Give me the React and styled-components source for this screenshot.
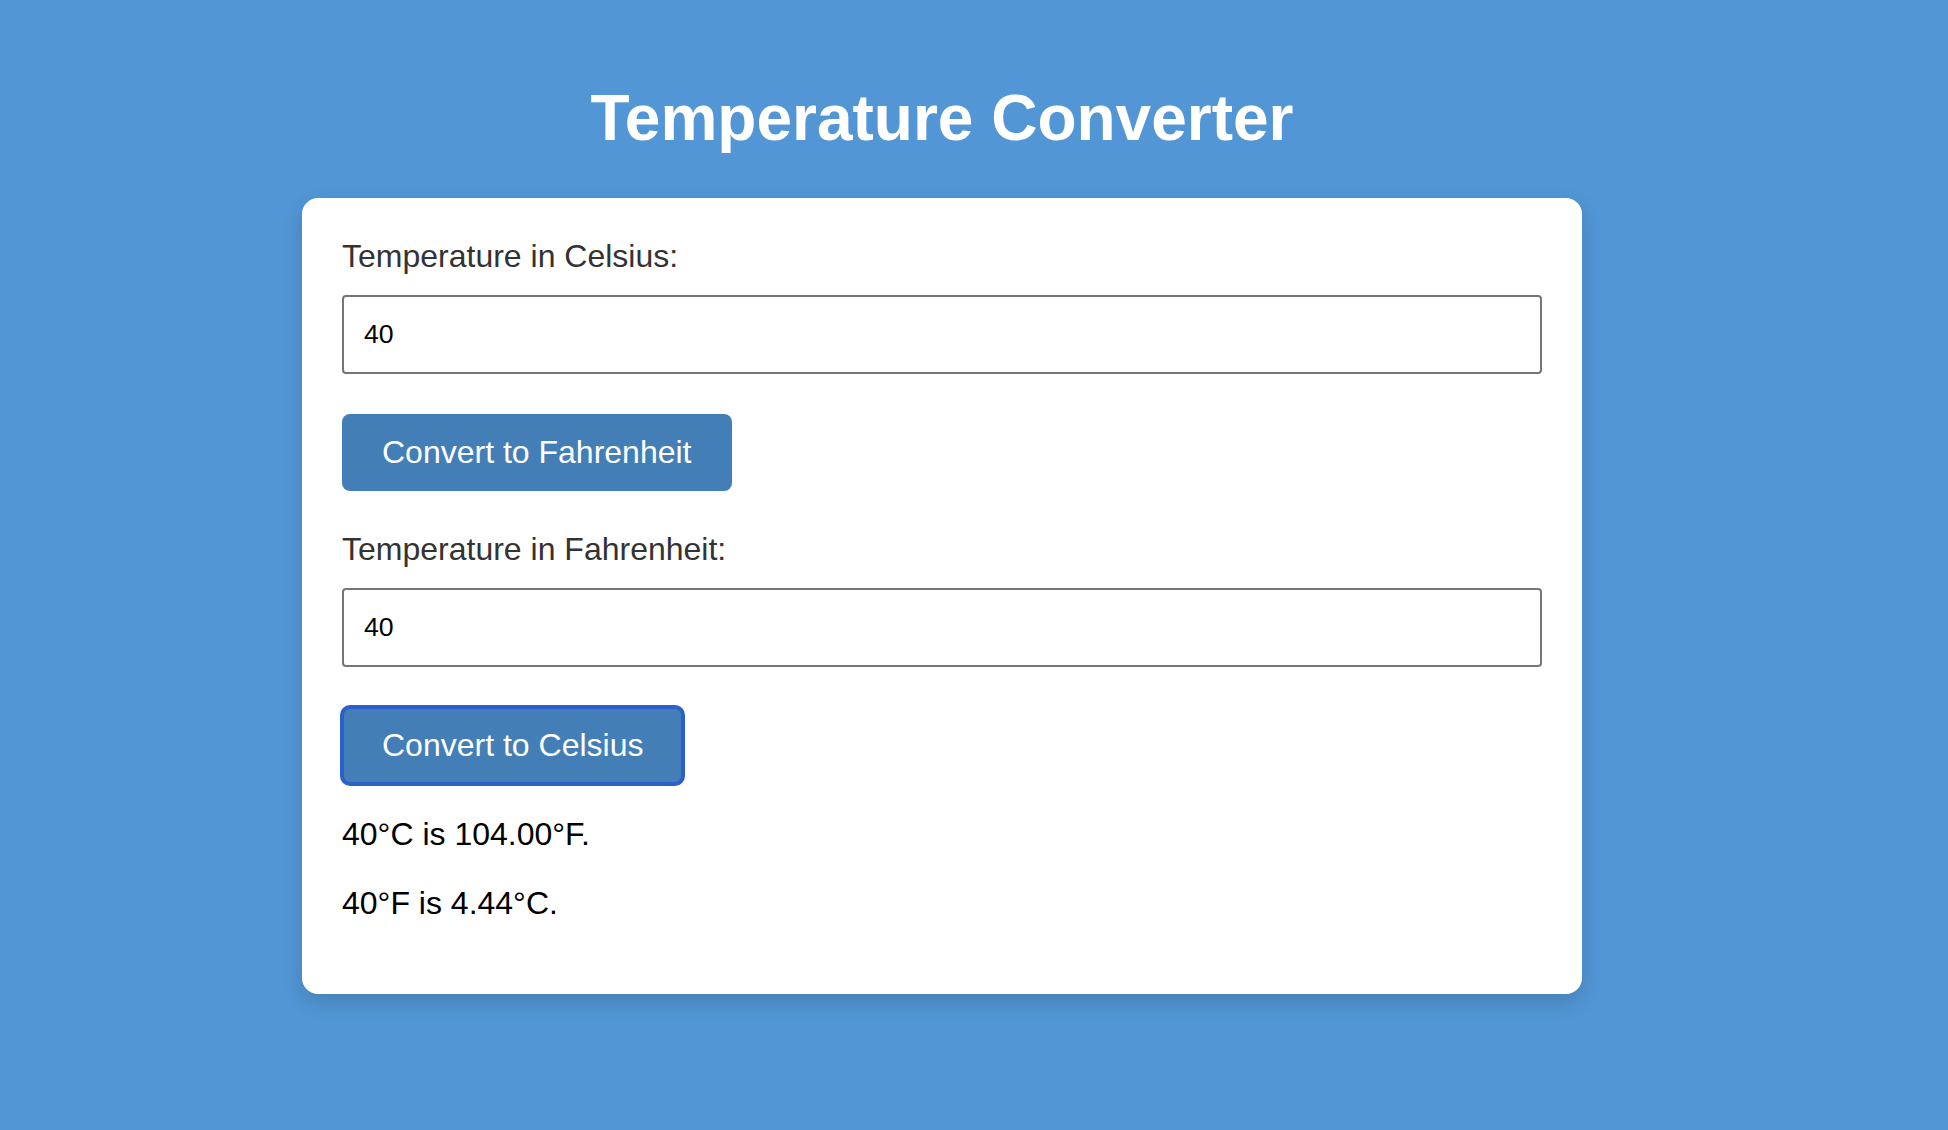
import React, { useState } from 'react';
import styled, { createGlobalStyle } from 'styled-components';

const GlobalStyle = createGlobalStyle`
  html, body {
    margin: 0;
    padding: 0;
    background-color: #5296d5;
    font-family: "Liberation Sans", Arial, Helvetica, sans-serif;
  }
  body {
    min-height: 1130px;
  }
`

const Page = styled.div`
  display: flex;
  flex-direction: column;
  align-items: center;
  padding: 38px 64px 0 0;
`

const Title = styled.h1`
  margin: 43px 0;
  font-size: 64px;
  font-weight: bold;
  color: #fff;
  line-height: normal;
`

const Card = styled.div`
  width: 1280px;
  box-sizing: border-box;
  padding: 40px;
  background: #fff;
  border-radius: 16px;
  box-shadow: 0 8px 20px rgba(0, 0, 0, 0.15);
`

const Label = styled.label`
  display: block;
  font-size: 32px;
  color: #333;
  margin-bottom: 20px;
`

const Input = styled.input`
  display: block;
  width: 100%;
  height: 79px;
  box-sizing: border-box;
  padding: 0 20px;
  border: 2px solid #767676;
  border-radius: 4px;
  font-family: "Liberation Sans", Arial, sans-serif;
  font-size: 26.67px;
  color: #000;
  margin-bottom: 40px;
  outline: none;
`

const Button = styled.button`
  display: inline-block;
  padding: 20px 40px;
  border: none;
  border-radius: 8px;
  background-color: #437fb6;
  color: #fff;
  font-family: "Liberation Sans", Arial, sans-serif;
  font-size: 32px;
  line-height: normal;
  cursor: pointer;
  margin-bottom: ${p => (p.last ? '0' : '40px')};
  box-shadow: ${p => (p.focused ? '0 0 0 2px #2b5fcc, inset 0 0 0 2px #2b5fcc' : 'none')};
`

const Result = styled.p`
  margin: 32px 0;
  font-size: 32px;
  color: #000;
`

const App = () => {
  const [celsius, setCelsius] = useState('40');
  const [fahrenheit, setFahrenheit] = useState('40');

  const c = parseFloat(celsius);
  const f = parseFloat(fahrenheit);

  return <>
    <GlobalStyle />
    <Page>
      <Title>Temperature Converter</Title>
      <Card>
        <Label>Temperature in Celsius:</Label>
        <Input value={celsius} onChange={e => setCelsius(e.target.value)} />
        <Button>Convert to Fahrenheit</Button>
        <Label>Temperature in Fahrenheit:</Label>
        <Input value={fahrenheit} onChange={e => setFahrenheit(e.target.value)} />
        <Button last focused>Convert to Celsius</Button>
        <Result>{`${c}°C is ${(c * 9 / 5 + 32).toFixed(2)}°F.`}</Result>
        <Result>{`${f}°F is ${((f - 32) * 5 / 9).toFixed(2)}°C.`}</Result>
      </Card>
    </Page>
  </>
}

export default App;
